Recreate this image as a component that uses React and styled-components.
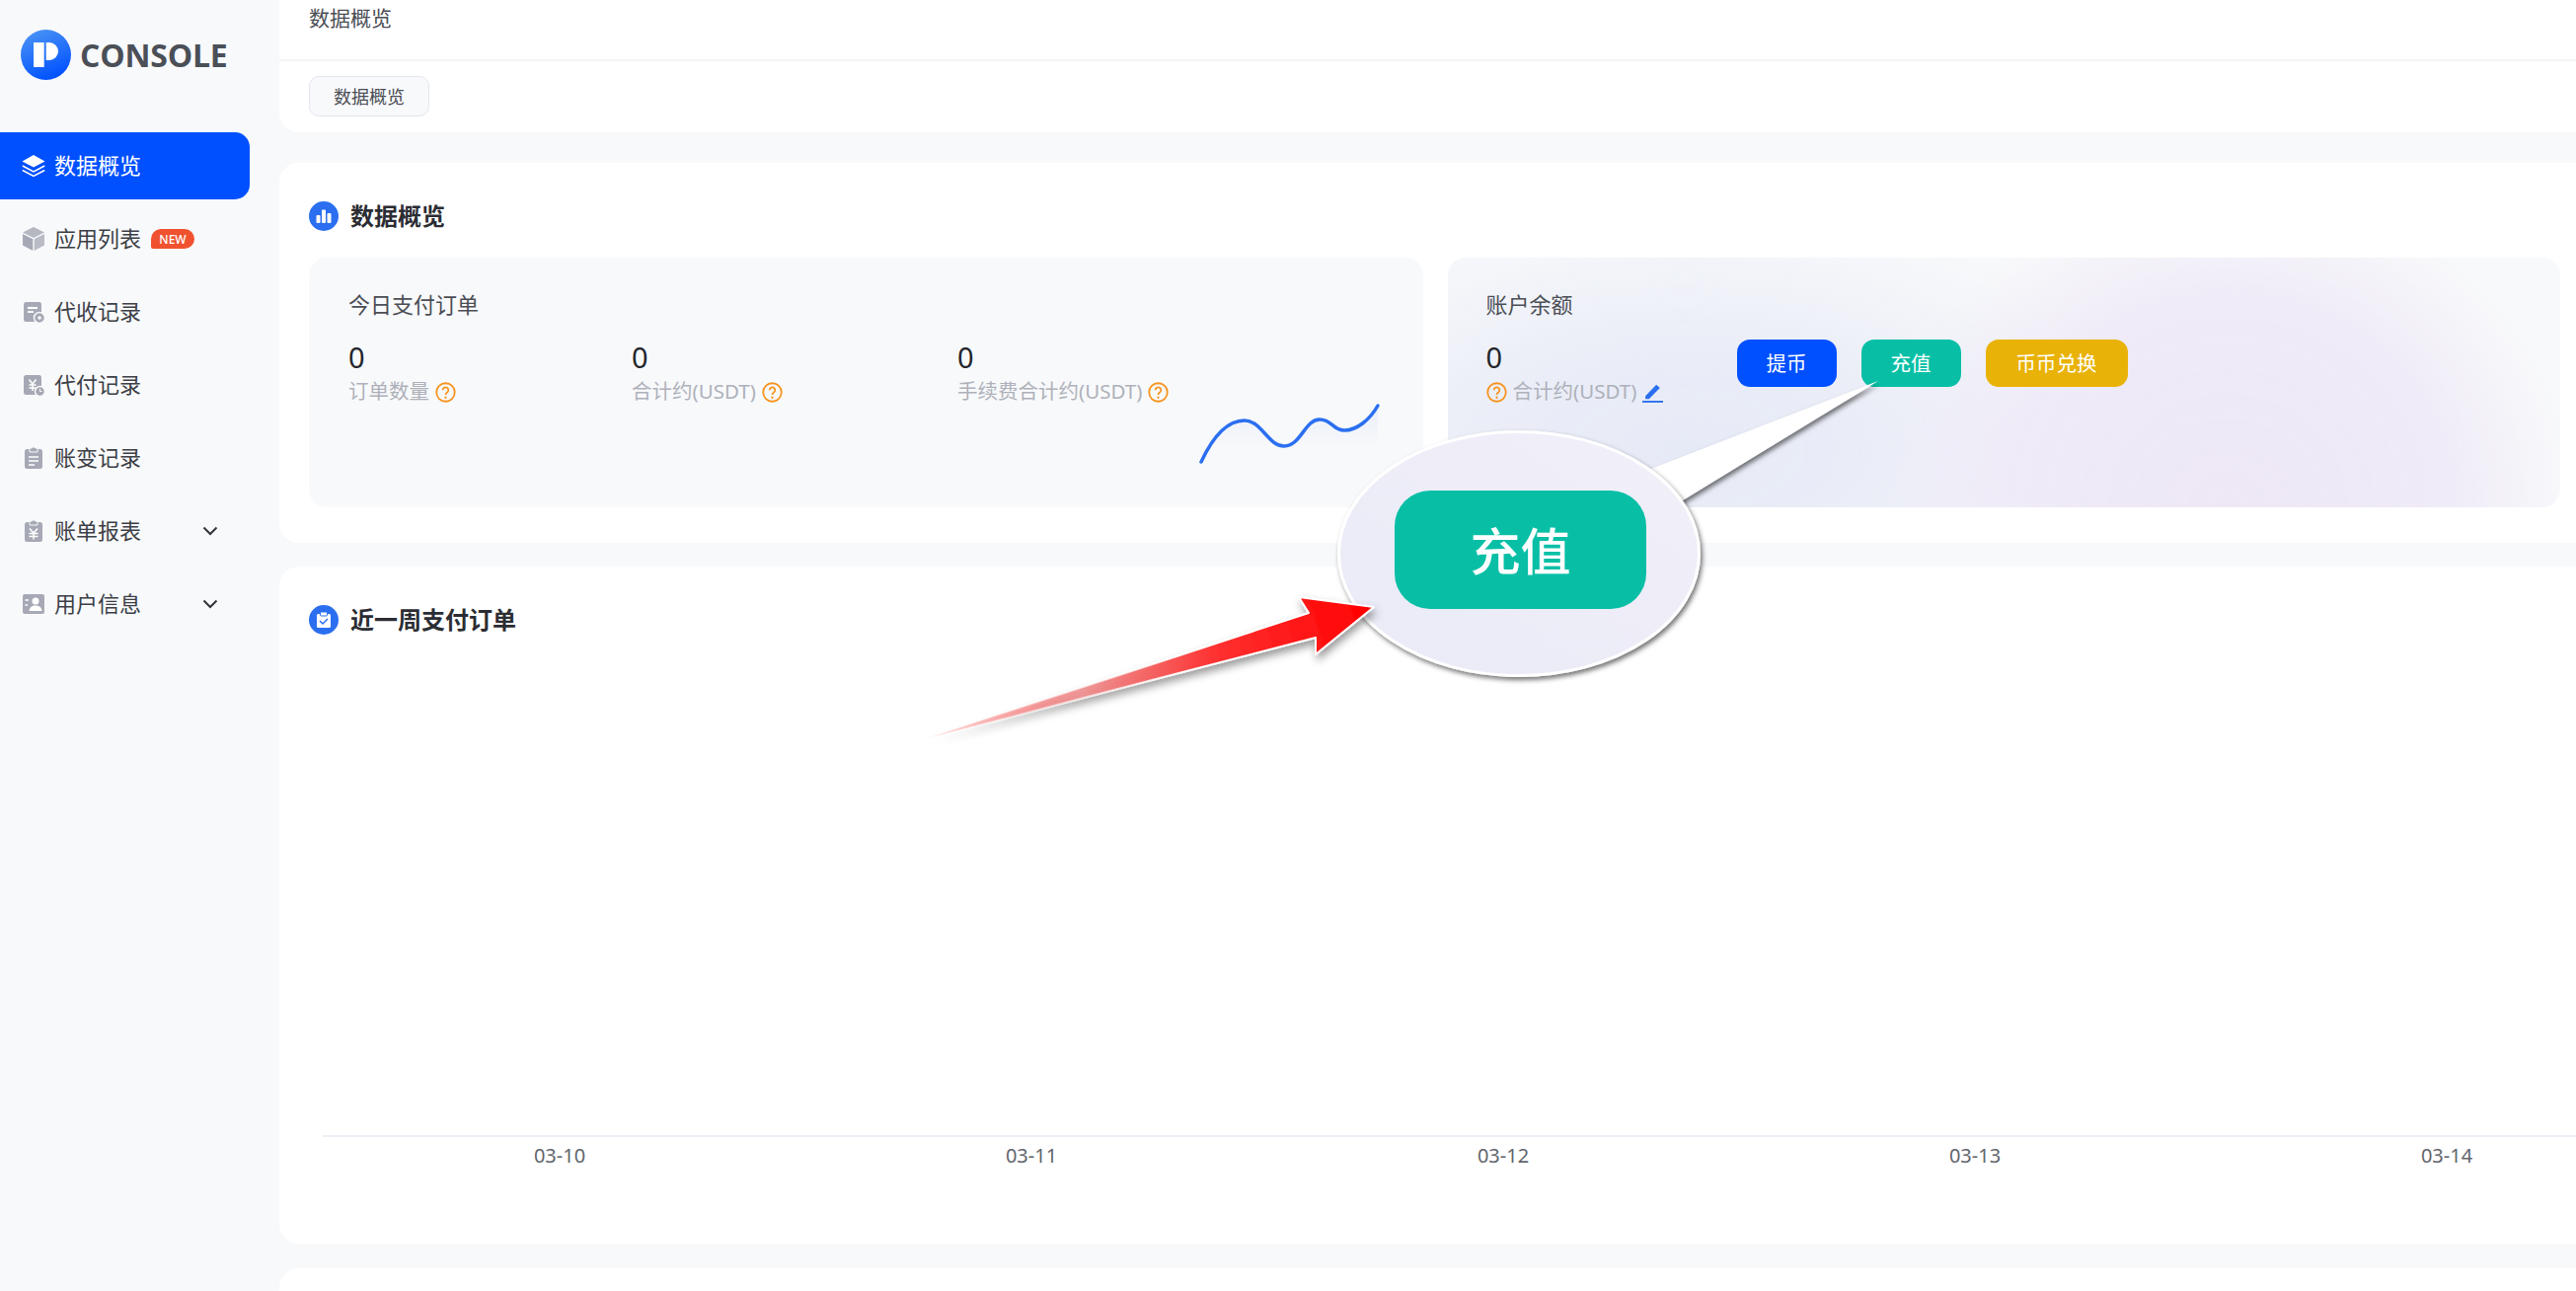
import React from 'react';
import styled, { createGlobalStyle } from 'styled-components';

const GlobalStyle = createGlobalStyle`
    html, body {
        margin: 0;
        padding: 0;
        height: 1308px;
        overflow: hidden;
        background: #f8f9fb;
        font-family: "Noto Sans", "Noto Sans CJK SC", sans-serif;
    }
`;

const Page = styled.div`
    position: relative;
    display: flex;
    width: 2610px;
    height: 1308px;
    overflow: hidden;
    background: #f8f9fb;
`;

const Sidebar = styled.aside`
    flex: 0 0 283px;
`;

const Brand = styled.div`
    display: flex;
    align-items: center;
    gap: 9px;
    height: 134px;
    padding: 30px 0 53px 21px;
    box-sizing: border-box;
`;

const BrandName = styled.span`
    font-family: "Open Sans", "Noto Sans", sans-serif;
    font-size: 32px;
    font-weight: 700;
    color: #4b4f57;
    letter-spacing: -0.2px;
`;

const Nav = styled.nav`
    display: flex;
    flex-direction: column;
    gap: 6px;
    width: 253px;
`;

const NavItem = styled.div`
    display: flex;
    align-items: center;
    height: 68px;
    padding-left: 22px;
    padding-right: 32px;
    box-sizing: border-box;
    border-radius: ${p => (p.$active ? '0 15px 15px 0' : '0')};
    background: ${p => (p.$active ? '#0050ff' : 'transparent')};
    color: ${p => (p.$active ? '#fff' : '#3c3f46')};
    font-size: 22px;
`;

const NavLabel = styled.span`
    margin-top: -5px;
    margin-left: -1px;
`;

const NavIcon = styled.svg`
    flex: 0 0 24px;
    width: 24px;
    height: 24px;
    margin-right: 10px;
`;

const NewBadge = styled.span`
    display: flex;
    align-items: center;
    justify-content: center;
    width: 44px;
    height: 20px;
    margin-left: 10px;
    border-radius: 10px 10px 10px 2px;
    background: #f0522f;
    color: #fff;
    font-size: 12px;
    font-weight: 500;
`;

const Chevron = styled.svg`
    width: 16px;
    height: 10px;
    margin-left: auto;
`;

const Main = styled.main`
    flex: 1;
    display: flex;
    flex-direction: column;
    min-width: 0;
`;

const HeaderCard = styled.header`
    flex: 0 0 134px;
    margin-bottom: 31px;
    background: #fff;
    border-radius: 0 0 0 20px;
`;

const Crumb = styled.div`
    height: 60px;
    padding-left: 30px;
    border-bottom: 2px solid #f3f4f8;
    font-size: 21px;
    line-height: 37px;
    color: #4b4e55;
`;

const Tag = styled.div`
    display: flex;
    align-items: center;
    justify-content: center;
    width: 122px;
    height: 41px;
    margin: 15px 0 0 30px;
    padding-bottom: 2px;
    box-sizing: border-box;
    border: 1px solid #e4e6ed;
    border-radius: 10px;
    background: #f8f9fb;
    font-size: 18px;
    color: #4b4e55;
`;

const Section = styled.section`
    flex: 0 0 ${p => p.$height}px;
    margin-bottom: ${p => p.$gap || 0}px;
    padding: 39px 16px 0 30px;
    box-sizing: border-box;
    background: #fff;
    border-radius: 20px 0 0 20px;
    overflow: hidden;
`;

const RestSection = styled.section`
    flex: 1;
    background: #fff;
    border-radius: 20px 0 0 0;
`;

const SectionTitle = styled.h2`
    display: flex;
    align-items: center;
    gap: 12px;
    height: 30px;
    margin: 0;
    font-size: 24px;
    font-weight: 700;
    color: #2b2d33;
`;

const TitleText = styled.span`
    margin-top: -3px;
`;

const TitleIcon = styled.svg`
    width: 30px;
    height: 30px;
`;

const CardRow = styled.div`
    display: flex;
    gap: 25px;
    margin-top: 27px;
`;

const Panel = styled.div`
    position: relative;
    flex: 1;
    height: 253px;
    padding: 32px 40px 0;
    box-sizing: border-box;
    border-radius: 18px;
    background: #f8f9fb;
`;

const BalancePanel = styled(Panel)`
    padding-left: 39px;
    background:
        radial-gradient(ellipse 350px 330px at 790px 253px, #eee8f6 0%, rgba(239, 234, 247, .97) 62%, rgba(245, 243, 250, 0) 100%),
        radial-gradient(ellipse 480px 250px at 240px 195px, #e6eaf6 0%, rgba(233, 236, 247, .85) 45%, rgba(245, 246, 251, 0) 100%),
        #f8f9fb;
`;

const PanelTitle = styled.div`
    font-size: 22px;
    line-height: 30px;
    color: #4b4e55;
`;

const StatRow = styled.div`
    display: flex;
    align-items: flex-start;
    margin-top: 22px;
`;

const Stat = styled.div`
    flex: 0 0 ${p => p.$width}px;
`;

const StatValue = styled.div`
    font-size: 29px;
    line-height: 34px;
    color: #23262c;
`;

const StatLabel = styled.div`
    display: flex;
    align-items: center;
    gap: 6px;
    margin-top: 2px;
    font-size: 20.5px;
    line-height: 30px;
    color: #aeb1ba;
`;

const SmallIcon = styled.svg`
    flex: 0 0 21px;
    width: 21px;
    height: 21px;
    margin-top: 2px;
`;

const ButtonRow = styled.div`
    display: flex;
    gap: 25px;
    margin-top: -1px;
`;

const ActionButton = styled.div`
    display: flex;
    align-items: center;
    justify-content: center;
    width: ${p => p.$width}px;
    height: 48px;
    padding-bottom: 2px;
    box-sizing: border-box;
    border-radius: 13px;
    background: ${p => p.$color};
    color: #fff;
    font-size: 20.5px;
`;

const Spark = styled.svg`
    position: absolute;
    right: 43px;
    bottom: 42px;
    width: 184px;
    height: 64px;
`;

const ChartArea = styled.div`
    height: 507px;
`;

const Axis = styled.div`
    display: flex;
    width: 2390px;
    margin-left: 14px;
    padding: 5px 0 0 1px;
    border-top: 2px solid #eeeef7;
`;

const AxisLabel = styled.div`
    flex: 0 0 478px;
    text-align: center;
    font-size: 20px;
    line-height: 28px;
    color: #62656c;
`;

const Annotation = styled.svg`
    position: absolute;
    left: 0;
    top: 0;
    width: 2610px;
    height: 1308px;
    pointer-events: none;
`;

const ZoomedButton = styled.div`
    position: absolute;
    left: 1413px;
    top: 497px;
    display: flex;
    align-items: center;
    justify-content: center;
    width: 255px;
    height: 120px;
    padding-bottom: 3px;
    box-sizing: border-box;
    border-radius: 36px;
    background: #08bfa6;
    color: #fff;
    font-size: 51px;
    font-weight: 500;
`;

const GREY = '#a6a9b5';

const LayersIcon = () => (
    <NavIcon viewBox="0 0 24 24">
        <path d="M12 1 23.5 7.5 12 13.5.5 7.500Z" fill="#fff" />
        <path d="M.8 12 12 18 23.2 12M.8 16.5 12 22.5 23.2 16.5" fill="none" stroke="#fff" strokeWidth="1.5" />
    </NavIcon>
);

const BoxIcon = () => (
    <NavIcon viewBox="0 0 24 24">
        <path d="M12 0 23 5.5 12 11 1 5.500Z" fill="#b5b7c1" />
        <path d="M1 7 11.3 12.3V24L1 18.500Z" fill={GREY} />
        <path d="M23 7 12.7 12.3V24L23 18.500Z" fill="#b9bcc5" />
    </NavIcon>
);

const ReceiveIcon = () => (
    <NavIcon viewBox="0 0 24 24">
        <rect x="2" y="2" width="18" height="20" rx="2.5" fill={GREY} />
        <path d="M6 8h10" stroke="#fff" strokeWidth="2.2" />
        <path d="M6 12h6" stroke="#fff" strokeWidth="1.8" />
        <circle cx="18" cy="18" r="5.5" fill={GREY} stroke="#f8f9fb" strokeWidth="1.5" />
        <circle cx="18" cy="18" r="1.8" fill="#f8f9fb" />
    </NavIcon>
);

const PayIcon = () => (
    <NavIcon viewBox="0 0 24 24">
        <rect x="2" y="2" width="18" height="20" rx="2.5" fill={GREY} />
        <path d="M7.5 6.5 11 11l3.500-4.500M7.500 12h7M7.500 15h7M11 11v7" fill="none" stroke="#fff" strokeWidth="1.5" />
        <circle cx="18.500" cy="18.500" r="5" fill={GREY} stroke="#f8f9fb" strokeWidth="1.5" />
        <path d="M18.500 16v2.500h2" fill="none" stroke="#f8f9fb" strokeWidth="1" />
    </NavIcon>
);

const ClipboardShape = () => (
    <>
        <rect x="3" y="3" width="18" height="20" rx="2.5" fill={GREY} />
        <path d="M8 4.500V3.500a1.500 1.500 0 0 1 1.500-1.500h.8a1.800 1.800 0 0 1 3.400 0h.8A1.500 1.500 0 0 1 16 3.500V6H8Z" fill={GREY} stroke="#f8f9fb" strokeWidth="1" />
    </>
);

const LedgerIcon = () => (
    <NavIcon viewBox="0 0 24 24">
        <ClipboardShape />
        <path d="M7 11h10M7 15h10M7 19h6" stroke="#fff" strokeWidth="1.700" />
    </NavIcon>
);

const ReportIcon = () => (
    <NavIcon viewBox="0 0 24 24">
        <ClipboardShape />
        <path d="M8 9.500 12 14l4-4.500M7.500 14.500h9M7.500 17.500h9M12 14v6.500" fill="none" stroke="#fff" strokeWidth="1.500" />
    </NavIcon>
);

const ContactIcon = () => (
    <NavIcon viewBox="0 0 24 24">
        <rect x="1" y="2" width="22" height="20" rx="2" fill={GREY} />
        <circle cx="14" cy="9" r="3.500" fill="#fff" />
        <path d="M7.500 19c.5-4 3-5.500 6.500-5.500s6 1.500 6.500 5.500Z" fill="#fff" />
        <path d="M3.500 8H7M3.500 13H6" stroke="#fff" strokeWidth="1.500" />
    </NavIcon>
);

const ChevronDown = () => (
    <Chevron viewBox="0 0 16 10">
        <path d="M1.500 1.500 8 8l6.500-6.500" fill="none" stroke="#33353b" strokeWidth="2" />
    </Chevron>
);

const HelpIcon = () => (
    <SmallIcon viewBox="0 0 20 20">
        <circle cx="10" cy="10" r="8.800" fill="none" stroke="#f7931e" strokeWidth="1.700" />
        <path d="M7.300 7.800a2.700 2.700 0 1 1 4.200 2.300c-1 .7-1.500 1.100-1.500 2.300" fill="none" stroke="#f7931e" strokeWidth="1.700" />
        <circle cx="10" cy="15" r="1.100" fill="#f7931e" />
    </SmallIcon>
);

const PenIcon = () => (
    <SmallIcon viewBox="0 0 20 20">
        <path d="M3 13.500 13.500 2.500l3.500 3.300L6.500 16.500H3Z" fill="#2b6ff0" />
        <path d="M0 19h20" stroke="#2b6ff0" strokeWidth="1.800" />
    </SmallIcon>
);

const BarsBadge = () => (
    <TitleIcon viewBox="0 0 30 30">
        <circle cx="15" cy="15" r="15" fill="#2b6ff0" />
        <rect x="7.500" y="14" width="4" height="8" rx="1" fill="#fff" />
        <rect x="13" y="8.500" width="4" height="13.500" rx="1" fill="#fff" />
        <rect x="18.500" y="12" width="4" height="10" rx="1" fill="#fff" />
    </TitleIcon>
);

const ClipboardBadge = () => (
    <TitleIcon viewBox="0 0 30 30">
        <circle cx="15" cy="15" r="15" fill="#2b6ff0" />
        <rect x="8" y="9" width="14" height="14" rx="1.500" fill="#fff" />
        <rect x="11.500" y="7" width="7" height="4" rx="1" fill="#fff" stroke="#2b6ff0" strokeWidth="1" />
        <path d="M11 16l3 3 5-5" fill="none" stroke="#2b6ff0" strokeWidth="1.500" />
    </TitleIcon>
);

const BrandLogo = () => (
    <svg width="51" height="51" viewBox="0 0 51 51">
        <defs>
            <linearGradient id="brand-fill" x1=".2" y1="0" x2=".6" y2="1">
                <stop offset="0" stopColor="#4a94f5" />
                <stop offset="1" stopColor="#0050ff" />
            </linearGradient>
        </defs>
        <circle cx="25.500" cy="25.500" r="25.500" fill="url(#brand-fill)" />
        <rect x="13" y="13" width="10.700" height="25" fill="#fff" />
        <path d="M25.700 13H29a9 9 0 0 1 0 18h-3.300Z" fill="#fff" />
    </svg>
);

const Sparkline = () => (
    <Spark viewBox="1215 408 184 64">
        <defs>
            <linearGradient id="spark-fill" x1="0" y1="0" x2="0" y2="1">
                <stop offset="0" stopColor="#2b6ff0" stopOpacity=".07" />
                <stop offset=".75" stopColor="#2b6ff0" stopOpacity="0" />
            </linearGradient>
        </defs>
        <path d="M1217 468C1230 440 1245 426 1261 426C1278 426 1285 452 1301 452C1318 452 1322 425 1337 425C1350 425 1350 436 1362 436C1375 436 1388 425 1396 411V468Z" fill="url(#spark-fill)" />
        <path d="M1217 468C1230 440 1245 426 1261 426C1278 426 1285 452 1301 452C1318 452 1322 425 1337 425C1350 425 1350 436 1362 436C1375 436 1388 425 1396 411" fill="none" stroke="#2b6ff0" strokeWidth="3.500" strokeLinecap="round" />
    </Spark>
);

const CalloutDrawing = () => (
    <Annotation viewBox="0 0 2610 1308">
        <defs>
            <filter id="call-shadow" x="-20%" y="-20%" width="140%" height="140%">
                <feDropShadow dx="2" dy="3" stdDeviation="2.500" floodColor="#000" floodOpacity=".55" />
            </filter>
            <filter id="arrow-shadow" x="-10%" y="-20%" width="120%" height="150%">
                <feDropShadow dx="2" dy="5" stdDeviation="4" floodColor="#000" floodOpacity=".4" />
            </filter>
            <linearGradient id="lens-fill" x1="0" y1="1" x2="1" y2="0">
                <stop offset="0" stopColor="#e9ebf7" />
                <stop offset="1" stopColor="#f2eff8" />
            </linearGradient>
            <linearGradient id="arrow-fill" gradientUnits="userSpaceOnUse" x1="936" y1="749" x2="1392" y2="615">
                <stop offset="0" stopColor="#ff0000" stopOpacity=".03" />
                <stop offset=".35" stopColor="#e88" stopOpacity=".85" />
                <stop offset=".65" stopColor="#ff3030" />
                <stop offset="1" stopColor="#ff0000" />
            </linearGradient>
            <linearGradient id="arrow-edge" gradientUnits="userSpaceOnUse" x1="945" y1="745" x2="1200" y2="670">
                <stop offset="0" stopColor="#fff" stopOpacity="0" />
                <stop offset="1" stopColor="#fff" />
            </linearGradient>
        </defs>
        <path d="M1660 480 1903 386 1700 510Z" fill="#fff" filter="url(#call-shadow)" />
        <ellipse cx="1539" cy="561" rx="182.500" ry="123.500" fill="url(#lens-fill)" stroke="#fff" strokeWidth="3" filter="url(#call-shadow)" />
        <path d="M936 749 1326 621 1316 605 1392 615 1333 663 1333 646Z" fill="url(#arrow-fill)" stroke="url(#arrow-edge)" strokeWidth="2" strokeLinejoin="round" filter="url(#arrow-shadow)" />
    </Annotation>
);

const NAV_ITEMS = [
    { label: '数据概览', Icon: LayersIcon, active: true },
    { label: '应用列表', Icon: BoxIcon, badge: true },
    { label: '代收记录', Icon: ReceiveIcon },
    { label: '代付记录', Icon: PayIcon },
    { label: '账变记录', Icon: LedgerIcon },
    { label: '账单报表', Icon: ReportIcon, more: true },
    { label: '用户信息', Icon: ContactIcon, more: true },
];

const TODAY_STATS = [
    { label: '订单数量', width: 287 },
    { label: '合计约(USDT)', width: 330 },
    { label: '手续费合计约(USDT)', width: 400 },
];

const DATES = ['03-10', '03-11', '03-12', '03-13', '03-14'];

export default function App() {
    return (
        <Page>
            <GlobalStyle />
            <Sidebar>
                <Brand>
                    <BrandLogo />
                    <BrandName>CONSOLE</BrandName>
                </Brand>
                <Nav>
                    {NAV_ITEMS.map(({ label, Icon, active, badge, more }) => (
                        <NavItem key={label} $active={active}>
                            <Icon />
                            <NavLabel>{label}</NavLabel>
                            {badge && <NewBadge>NEW</NewBadge>}
                            {more && <ChevronDown />}
                        </NavItem>
                    ))}
                </Nav>
            </Sidebar>
            <Main>
                <HeaderCard>
                    <Crumb>数据概览</Crumb>
                    <Tag>数据概览</Tag>
                </HeaderCard>
                <Section $height={385} $gap={24}>
                    <SectionTitle><BarsBadge /><TitleText>数据概览</TitleText></SectionTitle>
                    <CardRow>
                        <Panel>
                            <PanelTitle>今日支付订单</PanelTitle>
                            <StatRow>
                                {TODAY_STATS.map(s => (
                                    <Stat key={s.label} $width={s.width}>
                                        <StatValue>0</StatValue>
                                        <StatLabel>{s.label}<HelpIcon /></StatLabel>
                                    </Stat>
                                ))}
                            </StatRow>
                            <Sparkline />
                        </Panel>
                        <BalancePanel>
                            <PanelTitle>账户余额</PanelTitle>
                            <StatRow>
                                <Stat $width={254}>
                                    <StatValue>0</StatValue>
                                    <StatLabel><HelpIcon />合计约(USDT)<PenIcon /></StatLabel>
                                </Stat>
                                <ButtonRow>
                                    <ActionButton $width={101} $color="#0050ff">提币</ActionButton>
                                    <ActionButton $width={101} $color="#08bfa6">充值</ActionButton>
                                    <ActionButton $width={144} $color="#e9b207">币币兑换</ActionButton>
                                </ButtonRow>
                            </StatRow>
                        </BalancePanel>
                    </CardRow>
                </Section>
                <Section $height={686} $gap={25}>
                    <SectionTitle><ClipboardBadge /><TitleText>近一周支付订单</TitleText></SectionTitle>
                    <ChartArea />
                    <Axis>
                        {DATES.map(d => <AxisLabel key={d}>{d}</AxisLabel>)}
                    </Axis>
                </Section>
                <RestSection />
            </Main>
            <CalloutDrawing />
            <ZoomedButton>充值</ZoomedButton>
        </Page>
    );
}
